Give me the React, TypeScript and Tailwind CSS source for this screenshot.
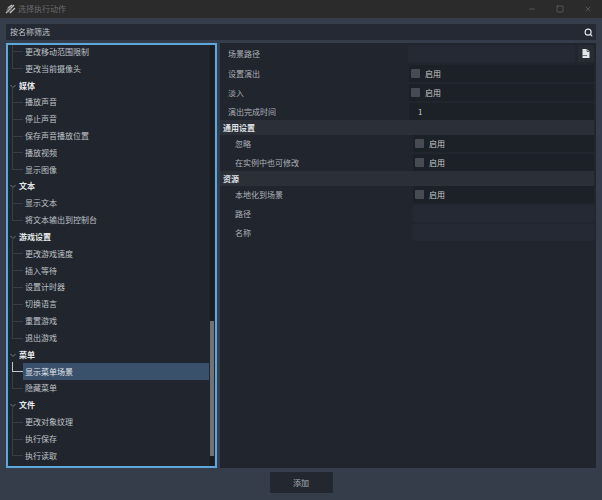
import { Minus, Search, Square, X } from "lucide-react";

type Ttree = {
  name: string;
  group?: boolean;
  selected?: boolean;
};

const tree: Ttree[] = [
  { name: "更改移动范围限制" },
  { name: "更改当前摄像头" },
  { name: "媒体", group: true },
  { name: "播放声音" },
  { name: "停止声音" },
  { name: "保存声音播放位置" },
  { name: "播放视频" },
  { name: "显示图像" },
  { name: "文本", group: true },
  { name: "显示文本" },
  { name: "将文本输出到控制台" },
  { name: "游戏设置", group: true },
  { name: "更改游戏速度" },
  { name: "插入等待" },
  { name: "设置计时器" },
  { name: "切换语言" },
  { name: "重置游戏" },
  { name: "退出游戏" },
  { name: "菜单", group: true },
  { name: "显示菜单场景", selected: true },
  { name: "隐藏菜单" },
  { name: "文件", group: true },
  { name: "更改对象纹理" },
  { name: "执行保存" },
  { name: "执行读取" },
];

function TreeRow({ item }: { item: Ttree }) {
  if (item.group) {
    return (
      <div className="h-[16.83px] flex items-center pl-[2px] gap-[3px] text-[8px] font-bold text-[#e6e8ea]">
        <svg width="6" height="6" viewBox="0 0 6 6">
          <path d="M0.5 2 L3 4.5 L5.5 2" fill="none" stroke="#7d8288" strokeWidth="0.9" />
        </svg>
        <span>{item.name}</span>
      </div>
    );
  }
  return (
    <div className="relative h-[16.83px] flex items-center pl-[15px]">
      <div
        className={
          item.selected
            ? "absolute left-[4px] top-[-1px] w-[11px] h-[10px] border-l border-b border-[#c4c6c9]"
            : "absolute left-[4px] top-[-8px] w-[11px] h-[17px] border-l border-b border-[#383d45]"
        }
      />
      <div
        className={
          item.selected
            ? "w-[186px] h-[17px] flex items-center px-[2px] bg-[#3a516c] text-[8px] text-[#e2e5e8]"
            : "w-[186px] h-[17px] flex items-center px-[2px] text-[8px] text-[#bfc2c6]"
        }
      >
        {item.name}
      </div>
    </div>
  );
}

function Prop({ label, indent, first, children }: { label: string; indent?: boolean; first?: boolean; children: React.ReactNode }) {
  return (
    <div className={first ? "flex h-[17px] items-center" : "flex h-[17px] items-center mt-[2px]"}>
      <span className={indent ? "w-[193px] pl-[15px] text-[8px] text-[#aeb1b6]" : "w-[189px] pl-[8px] text-[8px] text-[#aeb1b6]"}>
        {label}
      </span>
      {children}
    </div>
  );
}

function Check() {
  return (
    <div className="flex-1 h-[17px] flex items-center gap-[5px] pl-[2px] bg-[#1c2027] text-[8px] text-[#c8cacd]">
      <div className="w-[9px] h-[9px] rounded-[1px] bg-[#474b53]" />
      <span>启用</span>
    </div>
  );
}

function Category({ label }: { label: string }) {
  return (
    <div className="h-[15px] flex items-center pl-[3px] bg-[#2a2f38] text-[8px] font-bold text-[#dfe1e4]">{label}</div>
  );
}

export default function App() {
  return (
    <div
      className="w-[602px] h-[500px] flex flex-col bg-[#363d4a] overflow-hidden"
      style={{ fontFamily: '"Noto Sans CJK SC", "Noto Sans", sans-serif' }}
    >
      {/* title bar */}
      <div className="h-[18px] flex items-center bg-[#2b2b2b] pl-[5px] gap-[2px] text-[8px] text-[#696a6c]">
        <svg width="11" height="10" viewBox="0 0 11 10">
          <path d="M1 9 L9 1 M3 4 L7 1 M5 9 L10 4" stroke="#c0c0c0" strokeWidth="1.3" fill="none" />
          <circle cx="4" cy="6" r="2" fill="none" stroke="#8a8a8a" strokeWidth="0.8" />
        </svg>
        <span>选择执行动作</span>
        <div className="ml-auto flex items-center gap-[20px] pr-[10px] text-[#808183]">
          <Minus size={8} strokeWidth={1.4} />
          <Square size={8} strokeWidth={1.4} />
          <X size={8} strokeWidth={1.4} />
        </div>
      </div>

      {/* filter */}
      <div className="mt-[6px] mx-[6px] h-[17px] flex items-center justify-between pl-[4px] pr-[3px] bg-[#242933] text-[8px] text-[#bfc2c6]">
        <span>按名称筛选</span>
        <Search size={9} strokeWidth={3} className="text-[#e6e8ea]" />
      </div>

      <div className="flex-1 flex gap-[3px] mx-[6px] mt-[3px]">
        {/* left tree */}
        <div className="w-[211px] h-[425px] relative border-2 border-[#5ca8dd] bg-[#21262e] overflow-hidden">
          <div className="-mt-[2px]">
            {tree.map((item, index) => (
              <TreeRow key={index} item={item} />
            ))}
          </div>
          <div className="absolute right-[1px] top-0 bottom-0 w-[4px] bg-[#1a1d23]">
            <div className="mt-[276px] h-[135px] bg-[#6f7277]" />
          </div>
        </div>

        {/* right props */}
        <div className="w-[376px] h-[425px] bg-[#20252e] pt-[2px] pr-[2px]">
          <div className="flex h-[17px] items-center">
            <span className="w-[188px] pl-[8px] text-[8px] text-[#aeb1b6]">场景路径</span>
            <div className="w-[167px] h-[17px] bg-[#242933]" />
            <div className="ml-[3px] w-[16px] h-[17px] flex items-center justify-center bg-[#262b34]">
              <svg width="8" height="9" viewBox="0 0 8 9">
                <path d="M0.5 0 H5 L7.5 2.5 V9 H0.5 Z" fill="#e4e6e8" />
                <path d="M5 0 V2.5 H7.5" fill="none" stroke="#262b34" strokeWidth="0.7" />
                <path d="M0.5 6.5 H5" stroke="#262b34" strokeWidth="0.6" />
              </svg>
            </div>
          </div>
          <div className="mt-[3px]">
            <Prop label="设置演出" first><Check /></Prop>
          </div>
          <Prop label="淡入"><Check /></Prop>
          <Prop label="演出完成时间">
            <div className="flex-1 h-[17px] flex items-center pl-[9px] bg-[#1c2027] text-[8px] text-[#c8cacd]">1</div>
          </Prop>
          <Category label="通用设置" />
          <Prop label="忽略" indent first><Check /></Prop>
          <Prop label="在实例中也可修改" indent><Check /></Prop>
          <Category label="资源" />
          <Prop label="本地化到场景" indent first><Check /></Prop>
          <Prop label="路径" indent><div className="flex-1 h-[17px] bg-[#242933]" /></Prop>
          <Prop label="名称" indent><div className="flex-1 h-[17px] bg-[#242933]" /></Prop>
        </div>
      </div>

      {/* add */}
      <div className="h-[32px] flex items-start justify-center pt-[4px]">
        <div className="w-[63px] h-[21px] flex items-center justify-center rounded-[1px] bg-[#232830] text-[8px] text-[#aeb1b6]">添加</div>
      </div>
    </div>
  );
}
